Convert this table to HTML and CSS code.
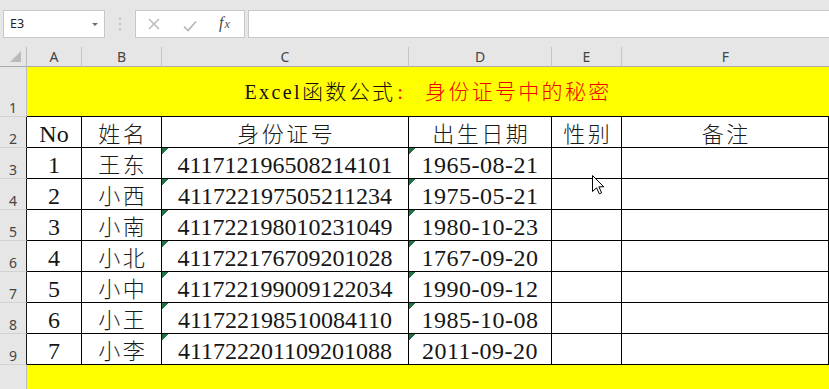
FILE: index.html
```html
<!DOCTYPE html>
<html lang="zh-CN">
<head>
<meta charset="utf-8">
<title>身份证号中的秘密</title>
<link rel="stylesheet" href="styles.css">
</head>
<body>
<div class="app">
  <div class="toolbar">
    <div class="namebox"><span class="cellref">E3</span><span class="dd"></span></div>
    <div class="sep"><i></i><i></i><i></i></div>
    <div class="fbtns">
      <svg class="ico-x" width="12" height="12" viewBox="0 0 12 12"><path d="M1 1 L11 11 M11 1 L1 11" stroke="#b4b4b4" stroke-width="1.3" fill="none"/></svg>
      <svg class="ico-ok" width="14" height="12" viewBox="0 0 14 12"><path d="M1 6.5 L5 10.5 L13 1.5" stroke="#b4b4b4" stroke-width="1.6" fill="none"/></svg>
      <span class="fx"><i>f</i><i class="sx">x</i></span>
    </div>
    <div class="finput"></div>
  </div>

  <div class="sheet">
    <div class="corner"><svg width="12" height="12" viewBox="0 0 12 12"><path d="M11 0 L11 11 L0 11 Z" fill="#b9b9b9"/></svg></div>
    <div class="ch">A</div><div class="ch">B</div><div class="ch">C</div><div class="ch">D</div><div class="ch">E</div><div class="ch">F</div>

    <div class="rh">1</div>
    <div class="title"><span class="lat">Excel</span><span class="tz">函数公式</span><span class="red"><span class="colon">:</span><span class="tz">身份证号中的秘密</span></span></div>

    <div class="rh tb">2</div>
    <div class="c">No</div><div class="c"><span class="zh">姓名</span></div><div class="c"><span class="zh">身份证号</span></div><div class="c"><span class="zh">出生日期</span></div><div class="c"><span class="zh">性别</span></div><div class="c"><span class="zh">备注</span></div>

    <div class="rh tb">3</div>
    <div class="c">1</div><div class="c"><span class="zh">王东</span></div><div class="c flag">411712196508214101</div><div class="c flag date">1965-08-21</div><div class="c"></div><div class="c"></div>

    <div class="rh tb">4</div>
    <div class="c">2</div><div class="c"><span class="zh">小西</span></div><div class="c flag">411722197505211234</div><div class="c flag date">1975-05-21</div><div class="c"></div><div class="c"></div>

    <div class="rh tb">5</div>
    <div class="c">3</div><div class="c"><span class="zh">小南</span></div><div class="c flag">411722198010231049</div><div class="c flag date">1980-10-23</div><div class="c"></div><div class="c"></div>

    <div class="rh tb">6</div>
    <div class="c">4</div><div class="c"><span class="zh">小北</span></div><div class="c flag">411722176709201028</div><div class="c flag date">1767-09-20</div><div class="c"></div><div class="c"></div>

    <div class="rh tb">7</div>
    <div class="c">5</div><div class="c"><span class="zh">小中</span></div><div class="c flag">411722199009122034</div><div class="c flag date">1990-09-12</div><div class="c"></div><div class="c"></div>

    <div class="rh tb">8</div>
    <div class="c">6</div><div class="c"><span class="zh">小王</span></div><div class="c flag">411722198510084110</div><div class="c flag date">1985-10-08</div><div class="c"></div><div class="c"></div>

    <div class="rh tb">9</div>
    <div class="c">7</div><div class="c"><span class="zh">小李</span></div><div class="c flag">411722201109201088</div><div class="c flag date">2011-09-20</div><div class="c"></div><div class="c"></div>

    <div class="rh last"></div>
    <div class="band"></div>
  </div>

  <svg class="cursor" width="13" height="20" viewBox="0 0 13 20"><path d="M0.5 0.5 L0.5 16.5 L4.5 12.8 L7.3 18.8 L9.6 17.8 L6.9 11.8 L11.8 11.8 Z" fill="#fff" stroke="#000" stroke-width="1" stroke-linejoin="miter"/></svg>
</div>
</body>
</html>
```

FILE: styles.css
```css
* { box-sizing: border-box; }
html, body { margin: 0; padding: 0; }
body {
  width: 829px;
  height: 389px;
  overflow: hidden;
  background: #e6e6e6;
  font-family: "Noto Sans", "Liberation Sans", sans-serif;
}
.app { width: 829px; height: 389px; }

/* ---------- formula bar ---------- */
.toolbar {
  height: 47px;
  display: flex;
  align-items: flex-start;
  padding: 10px 0 0 3px;
  background: #e6e6e6;
}
.namebox {
  width: 102px;
  height: 28px;
  background: #fff;
  border: 1px solid #c8c8c8;
  display: flex;
  align-items: center;
  justify-content: space-between;
  padding: 0 6px 0 6px;
}
.cellref {
  font-size: 12.5px;
  color: #222;
  line-height: 14px;
}
.dd {
  width: 0; height: 0;
  border-left: 3px solid transparent;
  border-right: 3px solid transparent;
  border-top: 3.5px solid #6e6e6e;
  margin-top: 1px;
}
.sep {
  width: 30px;
  height: 28px;
  display: flex;
  flex-direction: column;
  align-items: center;
  justify-content: center;
  gap: 3px;
}
.sep i {
  display: block;
  width: 2px; height: 2px;
  background: #c2c2c2;
}
.fbtns {
  width: 110px;
  height: 28px;
  background: #fff;
  border: 1px solid #c8c8c8;
  display: flex;
  align-items: center;
  padding-left: 12px;
}
.ico-x { display: block; margin-top: 0; }
.ico-ok { display: block; margin-left: 23px; margin-top: 3px; }
.fx {
  margin-left: 22px;
  font-family: "Liberation Serif", serif;
  color: #4a4a4a;
  font-size: 16px;
  line-height: 16px;
  margin-top: -2px;
}
.fx i { font-style: italic; }
.fx .sx { font-size: 12px; margin-left: 1px; }
.finput {
  flex: 1;
  height: 28px;
  margin-left: 3px;
  background: #fff;
  border: 1px solid #c8c8c8;
  border-right: none;
}

/* ---------- sheet ---------- */
.sheet {
  display: grid;
  grid-template-columns: 27px 55px 80px 247px 143px 70px 207px;
  grid-template-rows: 20px 50px repeat(8, 31px) 24px;
  background: #fff;
}
.corner {
  background: #e6e6e6;
  border-right: 1px solid #bdbdbd;
  border-bottom: 1px solid #ababab;
  display: flex;
  justify-content: flex-end;
  align-items: flex-end;
  padding: 0 4px 3px 0;
}
.corner svg { display: block; }
.ch {
  background: #e6e6e6;
  border-right: 1px solid #c6c6c6;
  border-bottom: 1px solid #ababab;
  text-align: center;
  font-size: 14px;
  line-height: 16px;
  padding-top: 2px;
  color: #444;
}
.ch:nth-child(7) { border-right: none; }
.rh {
  background: #e6e6e6;
  border-right: 1px solid #bdbdbd;
  border-bottom: 1px solid #d2d2d2;
  color: #444;
  font-size: 14px;
  line-height: 16px;
  text-align: center;
  display: flex;
  flex-direction: column;
  justify-content: flex-end;
  padding-bottom: 0;
}
.rh.tb { border-right-color: #1a1a1a; }
.rh.last { border-bottom: none; }

.title {
  grid-column: 2 / span 6;
  background: #ffff00;
  border-bottom: 1px solid #000;
  text-align: center;
  font-family: "Liberation Serif", "Noto Sans CJK SC", serif;
  font-size: 20px;
  line-height: 47px;
  padding-top: 2px;
  color: #111;
  white-space: nowrap;
}
.lat { letter-spacing: 2.4px; }
.tz {
  font-family: "Noto Sans CJK SC", sans-serif;
  font-size: 21px;
  font-weight: 300;
  letter-spacing: 2.3px;
  line-height: 1;
}
.red { color: #f20000; }
.colon {
  font-size: 21px;
  margin: 0 22px 0 2px;
}

.c {
  border-right: 1px solid #000;
  border-bottom: 1px solid #000;
  font-family: "Liberation Serif", "Noto Sans CJK SC", serif;
  font-size: 24px;
  line-height: 26px;
  padding-top: 4px;
  text-align: center;
  color: #161616;
  white-space: nowrap;
  overflow: hidden;
}
.zh {
  font-family: "Noto Sans CJK SC", sans-serif;
  font-size: 22px;
  font-weight: 300;
  letter-spacing: 2.5px;
  margin-right: -2.5px;
  line-height: 1;
  color: #1a1a1a;
}
.date { letter-spacing: 0.5px; }
.flag {
  background-image: linear-gradient(135deg, #217346 4.3px, transparent 4.4px);
  background-size: 8px 8px;
  background-repeat: no-repeat;
}
.band {
  grid-column: 2 / span 6;
  background: #ffff00;
}

.cursor {
  position: absolute;
  left: 592px;
  top: 175px;
  display: block;
}
```
